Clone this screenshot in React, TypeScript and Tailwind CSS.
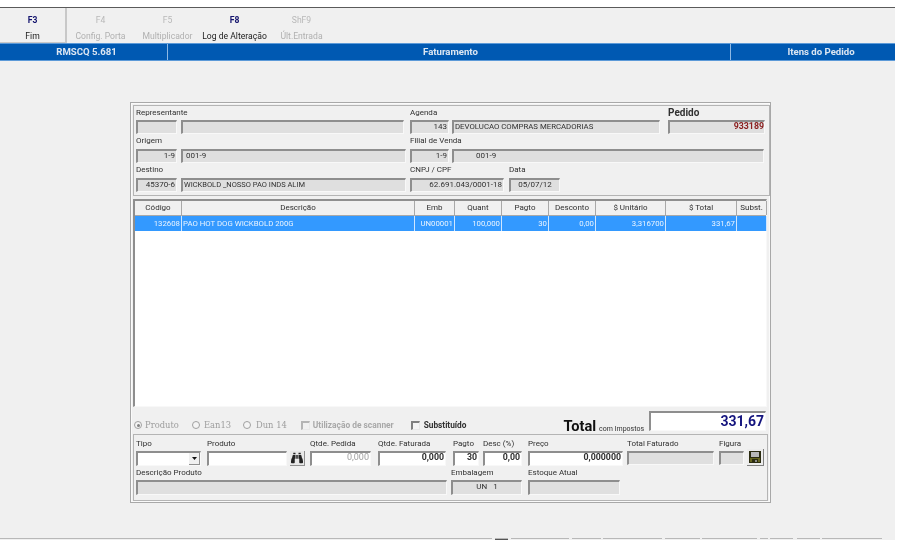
import React from "react";
import { FaBinoculars } from "react-icons/fa";

const sunken =
  "border-t-2 border-l-2 border-r border-b border-t-[#8e8e8e] border-l-[#8e8e8e] border-r-[#f8f8f8] border-b-[#f8f8f8]";

const Field = (props: {
  className?: string;
  value?: string;
  white?: boolean;
  align?: string;
  text?: string;
}) => (
  <div
    className={`${sunken} flex items-center px-[1px] pb-[2px] overflow-hidden whitespace-nowrap ${
      props.white ? "bg-white" : "bg-[#dfdfdf]"
    } ${props.align === "left" ? "justify-start" : "justify-end"} ${
      props.text ?? "text-[#303030]"
    } ${props.className ?? ""}`}
  >
    {props.value}
  </div>
);

const Label = (props: { className?: string; children?: React.ReactNode }) => (
  <div
    className={`flex items-center pb-[1px] whitespace-nowrap text-[#303030] ${props.className ?? ""}`}
  >
    {props.children}
  </div>
);

const ToolItem = (props: { k: string; label: string; on?: boolean; raised?: boolean }) => (
  <div
    className={`w-[67px] h-full flex flex-col items-center pt-[7px] text-[8.6px] ${
      props.raised ? "border-r-2 border-b border-r-[#c8c8c8] border-b-[#c8c8c8]" : ""
    }`}
  >
    <div className={`h-[10px] leading-[10px] ${props.on ? "font-bold text-[#14146e]" : "text-[#b8b8b8]"}`}>
      {props.k}
    </div>
    <div className={`mt-[6px] leading-[10px] whitespace-nowrap ${props.on ? "text-[#202020]" : "text-[#b0b0b0]"}`}>
      {props.label}
    </div>
  </div>
);

const columns = [
  { name: "Código", w: "w-[47px]", value: "132608", right: true },
  { name: "Descrição", w: "w-[233px]", value: "PAO HOT DOG WICKBOLD 200G", right: false },
  { name: "Emb", w: "w-[40px]", value: "UN00001", right: true },
  { name: "Quant", w: "w-[47px]", value: "100,000", right: true },
  { name: "Pagto", w: "w-[47px]", value: "30", right: true },
  { name: "Desconto", w: "w-[47px]", value: "0,00", right: true },
  { name: "$ Unitário", w: "w-[70px]", value: "3,316700", right: true },
  { name: "$ Total", w: "w-[71px]", value: "331,67", right: true },
  { name: "Subst.", w: "w-[30px]", value: "", right: true },
];

const statusCells = [
  "w-[492px]",
  "w-[13px] ml-[3px] bg-[#555555]",
  "w-[58px] ml-[3px]",
  "w-[29px] ml-[3px]",
  "w-[59px] ml-[2px]",
  "w-[35px] ml-[3px]",
  "w-[55px] ml-[2px]",
  "w-[8px] ml-[3px]",
  "w-[23px] ml-[2px]",
  "w-[23px] ml-[4px]",
  "w-[60px] ml-[2px]",
];

const Radio = (props: { checked?: boolean }) => (
  <span className="w-[8px] h-[8px] rounded-full border border-[#a0a0a0] bg-[#f4f4f4] flex items-center justify-center">
    {props.checked && <span className="w-[3px] h-[3px] rounded-full bg-[#808080]" />}
  </span>
);

const Check = (props: { dim?: boolean }) => (
  <span
    className={`w-[9px] h-[9px] border-t-2 border-l-2 border-r border-b border-r-[#e8e8e8] border-b-[#e8e8e8] ${
      props.dim ? "border-t-[#b4b4b4] border-l-[#b4b4b4]" : "border-t-[#808080] border-l-[#808080] bg-[#f4f4f4]"
    }`}
  />
);

const Floppy = () => (
  <svg width="12" height="12" viewBox="0 0 12 12">
    <rect x="0" y="0" width="12" height="12" fill="#2b2b10" />
    <rect x="2" y="1" width="8" height="5" fill="#b8b8b8" />
    <rect x="1" y="7" width="10" height="4" fill="#66661f" />
    <rect x="3" y="8" width="6" height="4" fill="#2b2b10" />
    <rect x="6" y="9" width="2" height="2" fill="#8a8a8a" />
  </svg>
);

export default function App() {
  return (
    <div className="w-[899px] h-[540px] bg-white overflow-hidden blur-[0.35px] text-[8px] font-['Roboto',sans-serif]">
      <div className="h-[7px]" />
      <div className="w-[895px] h-[533px] flex flex-col bg-[#f0f0f0] border-t border-t-[#5a5a5a]">
        {/* toolbar */}
        <div className="h-[35px] flex shrink-0">
          <ToolItem k="F3" label="Fim" on raised />
          <ToolItem k="F4" label="Config. Porta" />
          <ToolItem k="F5" label="Multiplicador" />
          <ToolItem k="F8" label="Log de Alteração" on />
          <ToolItem k="ShF9" label="Últ.Entrada" />
        </div>

        {/* title bar */}
        <div className="h-[18px] flex shrink-0 bg-[#0059b2] border-y border-y-[#5c9ad8] text-[#dce6f2] font-bold text-[9.6px]">
          <div className="w-[168px] flex items-center justify-center pt-[1px] pl-[6px] border-r border-r-[#8db8e4]">RMSCQ 5.681</div>
          <div className="w-[563px] flex items-center justify-center pt-[1px] pl-[3px] border-r border-r-[#8db8e4]">Faturamento</div>
          <div className="flex-1 flex items-center justify-center pt-[1px] pl-[16px]">Itens do Pedido</div>
        </div>

        {/* form */}
        <div className="flex-1 pt-[41px] pl-[130px]">
          <div className="w-[641px] h-[401px] border border-[#a8a8a8] shadow-[inset_0_0_0_1px_#fafafa] pt-[2px] pl-[2px] flex flex-col">
            {/* header panel */}
            <div className="w-[637px] h-[91px] border border-[#b4b4b4] pl-[2px]">
              <div className="flex h-[28px]">
                <div className="w-[41px] flex flex-col"><Label className="h-[14px]">Representante</Label><Field className="h-[14px]" /></div>
                <div className="w-[223px] ml-[4px] flex flex-col"><div className="h-[14px]" /><Field className="h-[14px]" /></div>
                <div className="w-[39px] ml-[6px] flex flex-col"><Label className="h-[14px]">Agenda</Label><Field className="h-[14px]" value="143" /></div>
                <div className="w-[208px] ml-[3px] flex flex-col"><div className="h-[14px]" /><Field className="h-[14px] text-[7.8px]" align="left" value="DEVOLUCAO COMPRAS MERCADORIAS" /></div>
                <div className="w-[97px] ml-[8px] flex flex-col">
                  <Label className="h-[14px] font-bold text-[10px]">Pedido</Label>
                  <Field className="h-[14px] font-bold text-[8.8px] pr-0!" text="text-[#8a1c1c]" value="933189" />
                </div>
              </div>
              <div className="flex h-[29px]">
                <div className="w-[41px] flex flex-col"><Label className="h-[15px]">Origem</Label><Field className="h-[14px]" value="1-9" /></div>
                <div className="w-[225px] ml-[4px] flex flex-col"><div className="h-[15px]" /><Field className="h-[14px] pl-[3px]" align="left" value="001-9" /></div>
                <div className="w-[39px] ml-[4px] flex flex-col"><Label className="h-[15px]">Filial de Venda</Label><Field className="h-[14px]" value="1-9" /></div>
                <div className="w-[312px] ml-[3px] flex flex-col"><div className="h-[15px]" /><Field className="h-[14px] pl-[22px]" align="left" value="001-9" /></div>
              </div>
              <div className="flex h-[29px]">
                <div className="w-[41px] flex flex-col"><Label className="h-[15px]">Destino</Label><Field className="h-[14px]" value="45370-6" /></div>
                <div className="w-[225px] ml-[4px] flex flex-col"><div className="h-[15px]" /><Field className="h-[14px] text-[7.5px]" align="left" value="WICKBOLD _NOSSO PAO INDS ALIM" /></div>
                <div className="w-[94px] ml-[4px] flex flex-col"><Label className="h-[15px]">CNPJ / CPF</Label><Field className="h-[14px]" value="62.691.043/0001-18" /></div>
                <div className="w-[51px] ml-[5px] flex flex-col"><Label className="h-[15px]">Data</Label><Field className="h-[14px] justify-center!" value="05/07/12" /></div>
              </div>
            </div>

            {/* grid */}
            <div className="w-[634px] h-[208px] mt-[3px] bg-white border-t-2 border-l-2 border-t-[#8e8e8e] border-l-[#8e8e8e] border-r border-b border-r-[#f8f8f8] border-b-[#f8f8f8]">
              <div className="flex h-[15px] bg-[#f0f0f0] border-b border-b-[#a8a8a8]">
                {columns.map((c) => (
                  <div key={c.name} className={`${c.w} flex items-center justify-center border-r border-r-[#a8a8a8] text-[#303030] shrink-0`}>
                    {c.name}
                  </div>
                ))}
              </div>
              <div className="flex h-[15px] bg-[#3399ff] text-[#eaf4ff] text-[7.8px]">
                {columns.map((c) => (
                  <div
                    key={c.name}
                    className={`${c.w} flex items-center shrink-0 px-[1px] whitespace-nowrap border-r border-r-[#cfe6ff] ${c.right ? "justify-end" : "justify-start"}`}
                  >
                    {c.value}
                  </div>
                ))}
              </div>
            </div>

            {/* options row */}
            <div className="h-[27px] flex items-center pt-[10px] w-[634px]">
              <div className="flex items-center pl-[1px] text-[#9c9c9c] font-['DejaVu_Serif',serif] text-[8.4px]">
                <Radio checked />
                <span className="ml-[3px] w-[47px]">Produto</span>
                <Radio />
                <span className="ml-[4px] w-[39px]">Ean13</span>
                <Radio />
                <span className="ml-[5px]">Dun 14</span>
              </div>
              <div className="flex items-center ml-[14px] text-[#a8a8a8] font-bold text-[8.4px]">
                <Check dim />
                <span className="ml-[3px]">Utilização de scanner</span>
              </div>
              <div className="flex items-center ml-[17px] text-[#303030] font-bold text-[8.3px]">
                <Check />
                <span className="ml-[4px]">Substituído</span>
              </div>
              <div className="flex-1" />
              <div className="flex items-end mr-[1px] -mt-[10px]">
                <span className="font-bold text-[14.6px] leading-[10px] text-[#111]">Total</span>
                <span className="ml-[3px] mr-[5px] text-[7px] leading-[4px] text-[#303030]">com Impostos</span>
                <div className={`${sunken} w-[117px] h-[20px] bg-white flex items-center justify-end pr-[1px] font-bold text-[14px] text-[#14147e]`}>331,67</div>
              </div>
            </div>

            {/* item panel */}
            <div className="w-[635px] h-[67px] border border-[#b4b4b4] pl-[2px] pt-[2px]">
              <div className="flex h-[29px]">
                <div className="w-[65px] flex flex-col"><Label className="h-[14px]">Tipo</Label>
                  <div className={`${sunken} h-[15px] bg-white flex justify-end`}>
                    <div className="w-[11px] bg-[#f0f0f0] border-r border-b border-r-[#909090] border-b-[#909090] flex items-center justify-center">
                      <svg width="5" height="3" viewBox="0 0 5 3"><path d="M0 0h5L2.5 3z" fill="#111" /></svg>
                    </div>
                  </div>
                </div>
                <div className="w-[80px] ml-[6px] flex flex-col"><Label className="h-[14px]">Produto</Label><Field white className="h-[15px]" /></div>
                <div className="w-[15px] ml-[3px] pt-[14px]">
                  <div className="h-[15px] bg-[#e8e8e8] border-r border-b border-r-[#909090] border-b-[#909090] flex items-center justify-center text-[#222]">
                    <FaBinoculars size={12} />
                  </div>
                </div>
                <div className="w-[61px] ml-[5px] flex flex-col"><Label className="h-[14px]">Qtde. Pedida</Label><Field white className="h-[15px] text-[9px]" text="text-[#a0a0a0]" value="0,000" /></div>
                <div className="w-[68px] ml-[7px] flex flex-col"><Label className="h-[14px]">Qtde. Faturada</Label><Field white className="h-[15px] font-bold text-[8.8px]" value="0,000" /></div>
                <div className="w-[26px] ml-[7px] flex flex-col"><Label className="h-[14px]">Pagto</Label><Field white className="h-[15px] font-bold text-[8.8px]" value="30" /></div>
                <div className="w-[39px] ml-[4px] flex flex-col"><Label className="h-[14px]">Desc (%)</Label><Field white className="h-[15px] font-bold text-[8.8px]" value="0,00" /></div>
                <div className="w-[95px] ml-[6px] flex flex-col"><Label className="h-[14px]">Preço</Label><Field white className="h-[15px] font-bold text-[8.8px]" value="0,000000" /></div>
                <div className="w-[87px] ml-[4px] flex flex-col"><Label className="h-[14px]">Total Faturado</Label><Field className="h-[14px]" /></div>
                <div className="w-[25px] ml-[5px] flex flex-col"><Label className="h-[14px]">Figura</Label><Field className="h-[14px]" /></div>
                <div className="w-[17px] ml-[3px] pt-[12px]">
                  <div className="h-[17px] bg-[#ececec] border-r border-b border-r-[#808080] border-b-[#808080] flex items-center justify-center">
                    <Floppy />
                  </div>
                </div>
              </div>
              <div className="flex h-[29px]">
                <div className="w-[311px] flex flex-col"><Label className="h-[14px]">Descrição Produto</Label><Field className="h-[15px]" /></div>
                <div className="w-[71px] ml-[4px] flex flex-col"><Label className="h-[14px]">Embalagem</Label><Field className="h-[15px] justify-center!" value={"UN\u00a0\u00a0\u00a01"} /></div>
                <div className="w-[92px] ml-[6px] flex flex-col"><Label className="h-[14px]">Estoque Atual</Label><Field className="h-[15px]" /></div>
              </div>
            </div>
          </div>
        </div>

        {/* status bar */}
        <div className="h-[2px] flex shrink-0">
          {statusCells.map((c) => (
            <div key={c} className={`${c} border-t border-t-[#b8b8b8]`} />
          ))}
        </div>
      </div>
    </div>
  );
}
